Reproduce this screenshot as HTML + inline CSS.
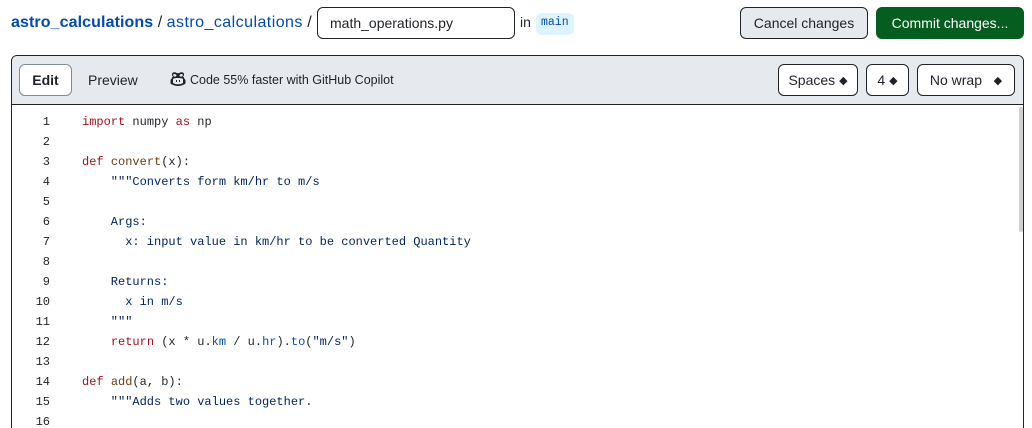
<!DOCTYPE html>
<html><head><meta charset="utf-8"><style>
*{box-sizing:border-box;margin:0;padding:0}
html,body{width:1032px;height:428px;overflow:hidden}
body{background:#fff;font-family:"Liberation Sans",sans-serif;color:#1f2328;position:relative}
.abs{position:absolute}
.btn{position:absolute;border:1px solid #1f2328;border-radius:6px;font-size:14px;display:flex;align-items:center;justify-content:center}
.code{font-family:"Liberation Mono",monospace;font-size:12px}
.ln{position:absolute;left:12px;width:38px;text-align:right;font-family:"Liberation Mono",monospace;font-size:12px;color:#1f2328}
.cl{position:absolute;left:82px;white-space:pre;font-family:"Liberation Mono",monospace;font-size:12px;color:#1f2328}
.k{color:#a0111f}.f{color:#6d3c10}.s{color:#032563}.b{color:#0550ae}
</style></head><body>
<div class="abs" style="left:11px;top:13px;font-size:16px;line-height:20px;color:#0349b4;white-space:nowrap"><b style="letter-spacing:0.1px">astro_calculations</b> <span style="color:#1f2328">/</span> <span style="letter-spacing:0.45px">astro_calculations</span> <span style="color:#1f2328">/</span></div>
<div class="abs" style="left:317px;top:7px;width:198px;height:32px;border:1px solid #1f2328;border-radius:6px;font-size:14px;padding:7px 12px;background:#fff">math_operations.py</div>
<div class="abs" style="left:520px;top:14px;font-size:14px">in</div>
<div class="abs code" style="left:536px;top:13px;height:22px;padding:3px 5px;background:#ddf4ff;border-radius:6px;color:#0349b4;font-size:11.5px">main</div>
<div class="btn" style="left:740px;top:7px;width:128px;height:32px;background:#e6eaef">Cancel changes</div>
<div class="btn" style="left:876px;top:7px;width:148px;height:32px;background:#055d20;border-color:#055d20;color:#fff">Commit changes...</div>

<div class="abs" style="left:11px;top:55px;width:1013px;height:390px;border:1px solid #1f2328;border-radius:6px;overflow:hidden">
 <div class="abs" style="left:0;top:0;width:100%;height:49px;background:#e6eaef;border-bottom:1px solid #1f2328"></div>
</div>
<div class="btn" style="left:19px;top:64px;width:53px;height:32px;background:#fff;border-color:#818b98;font-weight:bold">Edit</div>
<div class="abs" style="left:88px;top:72px;font-size:14px">Preview</div>
<svg class="abs" style="left:170px;top:71px" width="16" height="16" viewBox="0 0 16 16"><path fill="#1f2328" fill-rule="evenodd" d="M3 5.5C2 5 1.5 3 2.5 2 3.8.8 6 1.2 7 2.3 7.5 2 8.5 2 9 2.3 10 1.2 12.2.8 13.5 2c1 1 .5 3-.5 3.5.8.6 1.2 1.5 1.5 2.5.6.3 1 .8 1 1.5V12c0 .6-.4 1-1 1.3C12.5 14.5 10.3 15 8 15s-4.5-.5-6.5-1.7C1 13 .5 12.6.5 12V9.5c0-.7.4-1.2 1-1.5.3-1 .7-1.9 1.5-2.5zM4 3c-.8 0-1 .8-.8 1.5.3 1 1.3 1.2 2.3 1.1.8-.1 1-.6 1-1.2C6.4 3.5 5.5 3 4 3zm8 0c-1.5 0-2.4.5-2.5 1.4 0 .6.2 1.1 1 1.2 1 .1 2-.1 2.3-1.1.2-.7 0-1.5-.8-1.5zM8 7C6 7 3.5 7.2 3 8v4c1.5.9 3.3 1.3 5 1.3s3.5-.4 5-1.3V8c-.5-.8-3-1-5-1zM6 9h1v2H6zm3 0h1v2H9z"/></svg>
<div class="abs" style="left:190px;top:73px;font-size:12.5px">Code 55% faster with GitHub Copilot</div>
<div class="btn" style="left:778px;top:64px;width:80px;height:32px;background:#fff">Spaces&nbsp;<span style="font-size:11px">◆</span></div>
<div class="btn" style="left:866px;top:64px;width:43px;height:32px;background:#fff">4&nbsp;<span style="font-size:11px">◆</span></div>
<div class="btn" style="left:917px;top:64px;width:98px;height:32px;background:#fff">No wrap &nbsp;&nbsp;<span style="font-size:11px">◆</span></div>
<div class="abs" style="left:1019px;top:107px;width:4px;height:125px;background:#d0d0d0;border-radius:2px"></div>

<div class="ln" style="top:115px">1</div><div class="cl" style="top:115px"><span class="k">import</span> numpy <span class="k">as</span> np</div>
<div class="ln" style="top:135px">2</div>
<div class="ln" style="top:155px">3</div><div class="cl" style="top:155px"><span class="k">def</span> <span class="f">convert</span>(x):</div>
<div class="ln" style="top:175px">4</div><div class="cl s" style="top:175px">    """Converts form km/hr to m/s</div>
<div class="ln" style="top:195px">5</div>
<div class="ln" style="top:215px">6</div><div class="cl s" style="top:215px">    Args:</div>
<div class="ln" style="top:235px">7</div><div class="cl s" style="top:235px">      x: input value in km/hr to be converted Quantity</div>
<div class="ln" style="top:255px">8</div>
<div class="ln" style="top:275px">9</div><div class="cl s" style="top:275px">    Returns:</div>
<div class="ln" style="top:295px">10</div><div class="cl s" style="top:295px">      x in m/s</div>
<div class="ln" style="top:315px">11</div><div class="cl s" style="top:315px">    """</div>
<div class="ln" style="top:335px">12</div><div class="cl" style="top:335px">    <span class="k">return</span> (x * u.<span class="b">km</span> / u.<span class="b">hr</span>).<span class="b">to</span>(<span class="s">"m/s"</span>)</div>
<div class="ln" style="top:355px">13</div>
<div class="ln" style="top:375px">14</div><div class="cl" style="top:375px"><span class="k">def</span> <span class="f">add</span>(a, b):</div>
<div class="ln" style="top:395px">15</div><div class="cl s" style="top:395px">    """Adds two values together.</div>
<div class="ln" style="top:415px">16</div>
</body></html>
